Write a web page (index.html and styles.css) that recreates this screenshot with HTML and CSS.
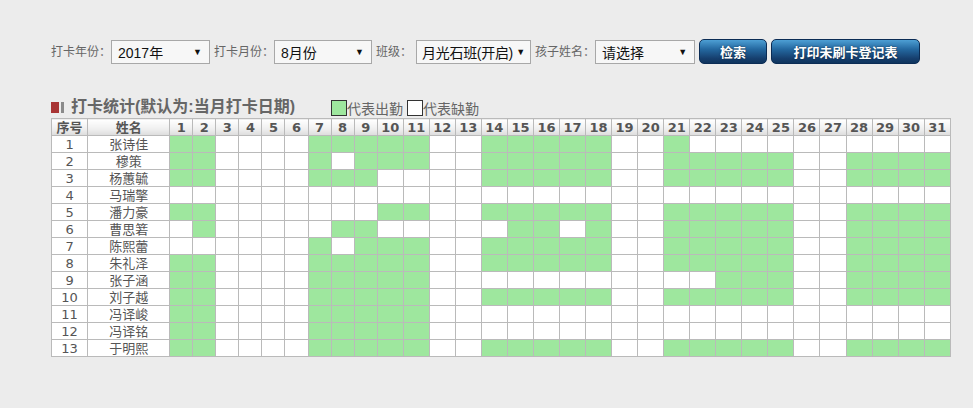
FILE: index.html
```html
<!DOCTYPE html>
<html lang="zh-CN">
<head>
    <meta charset="UTF-8">
    <title>打卡统计</title>
    <link rel="stylesheet" href="styles.css">
</head>
<body>
    <div class="page">
        <div class="filter">
            <span class="label">打卡年份：</span>
            <div class="select sel-year"><span>2017年</span><i>▼</i></div>
            <span class="label">打卡月份：</span>
            <div class="select sel-month"><span>8月份</span><i>▼</i></div>
            <span class="label label-class">班级：</span>
            <div class="select sel-class"><span>月光石班(开启)</span><i>▼</i></div>
            <span class="label">孩子姓名：</span>
            <div class="select sel-name"><span>请选择</span><i>▼</i></div>
            <button class="btn btn-search">检索</button>
            <button class="btn btn-print">打印未刷卡登记表</button>
        </div>

        <div class="title-bar">
            <span class="title-icon"><b></b><em></em></span>
            <h2>打卡统计(默认为:当月打卡日期)</h2>
            <span class="legend legend-on"><i class="box on"></i>代表出勤</span>
            <span class="legend"><i class="box"></i>代表缺勤</span>
        </div>

        <table class="stats">
            <colgroup id="cols">
                <col class="col-no">
                <col class="col-name">
            </colgroup>
            <thead>
                <tr id="headRow"><th>序号</th><th>姓名</th></tr>
            </thead>
            <tbody id="statsBody"></tbody>
        </table>
    </div>

    <script>
        // 1 = 出勤, 0 = 缺勤 (grouped by week for reading)
        const students = [
            ["张诗佳", "11 0000 11111 00 11111 00 10000 00 0000"],
            ["穆策",   "11 0000 10111 00 11111 00 11111 00 1111"],
            ["杨蕙毓", "11 0000 11100 00 11111 00 11111 00 1111"],
            ["马瑞擎", "00 0000 00000 00 00000 00 00000 00 0000"],
            ["潘力豪", "11 0000 00011 00 11111 00 11111 00 1111"],
            ["曹思箬", "01 0000 01100 00 01101 00 11111 00 1111"],
            ["陈熙蕾", "00 0000 10111 00 11111 00 11111 00 1111"],
            ["朱礼泽", "11 0000 11111 00 11111 00 11111 00 1111"],
            ["张子涵", "11 0000 11111 00 00000 00 00111 00 1111"],
            ["刘子越", "11 0000 11111 00 11111 00 11111 00 1111"],
            ["冯译峻", "11 0000 11111 00 00000 00 00000 00 0000"],
            ["冯译铭", "11 0000 11111 00 00000 00 00000 00 0000"],
            ["于明熙", "11 0000 11111 00 11111 00 11111 00 1111"]
        ];

        const cols = document.getElementById("cols");
        const headRow = document.getElementById("headRow");
        for (let d = 1; d <= 31; d++) {
            const col = document.createElement("col");
            col.className = d < 10 ? "col-d1" : "col-d2";
            cols.appendChild(col);
            const th = document.createElement("th");
            th.textContent = d;
            headRow.appendChild(th);
        }

        const body = document.getElementById("statsBody");
        students.forEach((s, i) => {
            const tr = document.createElement("tr");
            tr.innerHTML = "<td>" + (i + 1) + "</td><td class='name'>" + s[0] + "</td>";
            s[1].replace(/ /g, "").split("").forEach(v => {
                const td = document.createElement("td");
                if (v === "1") td.className = "on";
                tr.appendChild(td);
            });
            body.appendChild(tr);
        });
    </script>
</body>
</html>
```

FILE: styles.css
```css
body {
    margin: 0;
    background: #ececec;
    font-family: "Liberation Sans", "Noto Sans CJK SC", sans-serif;
    color: #666;
}
.page { padding: 39px 0 0 51px; }

/* filter bar */
.filter { display: flex; align-items: center; height: 25px; font-size: 12px; }
.label { color: #666; line-height: 24px; white-space: nowrap; }
.select + .label { margin-left: 4px; }
.label-class { margin-right: 4px; }
.select {
    box-sizing: border-box;
    height: 24px;
    border: 1px solid #a8a8a8;
    background: #f7f7f7;
    display: flex;
    align-items: center;
    justify-content: space-between;
    padding: 0 7px 0 6px;
    font-size: 14px;
    color: #111;
    white-space: nowrap;
}
.select span { overflow: hidden; }
.select i { font-style: normal; font-size: 9px; color: #111; flex: none; margin-left: 2px; }
.sel-year { width: 99px; }
.sel-month { width: 98px; }
.sel-class { width: 115px; padding: 0 5px 0 5px; }
.sel-class span { letter-spacing: -0.3px; }
.sel-name { width: 100px; }
.btn {
    height: 25px;
    margin-left: 4px;
    padding: 0;
    border: 1px solid #0b2c55;
    border-radius: 5px;
    background: linear-gradient(#4d9fd4, #2468a0 40%, #163f6e 80%, #0f345e);
    color: #fff;
    font-family: inherit;
    font-size: 13px;
    font-weight: bold;
    text-shadow: 0 0 2px rgba(0, 0, 0, 0.6);
}
.btn-search { width: 68px; }
.btn-print { width: 149px; }

/* title + legend */
.title-bar { display: flex; align-items: flex-end; height: 22px; margin-top: 31px; padding-bottom: 1px; }
.title-icon { display: flex; gap: 2px; margin-bottom: 4px; }
.title-icon b { width: 8px; height: 11px; background: #a83434; }
.title-icon em { width: 3px; height: 11px; background: #8a8a8a; }
.title-bar h2 {
    margin: 0 0 0 7px;
    font-size: 16px;
    line-height: 20px;
    font-weight: bold;
    color: #666;
}
.legend { display: flex; align-items: flex-end; font-size: 14px; line-height: 16px; color: #666; }
.legend-on { margin-left: 36px; }
.legend + .legend { margin-left: 4px; }
.box {
    box-sizing: border-box;
    width: 16px;
    height: 16px;
    border: 1px solid #333;
    background: #fff;
    margin-bottom: 1px;
}
.box.on { background: #9ee79e; }

/* stats table */
.stats {
    border-collapse: collapse;
    table-layout: fixed;
    width: 900px;
    font-family: "DejaVu Sans", "Noto Sans CJK SC", sans-serif;
    font-size: 13px;
    color: #555;
    background: #fff;
}
.col-no { width: 36px; }
.col-name { width: 82px; }
.col-d1 { width: 23px; }
.col-d2 { width: 26px; }
.stats th, .stats td {
    border: 1px solid #bababa;
    height: 16px;
    padding: 0;
    line-height: 15px;
    text-align: center;
    white-space: nowrap;
}
.stats th {
    background: linear-gradient(#ffffff, #f1f1f1 55%, #dcdcdc);
    font-weight: bold;
    font-size: 13px;
    color: #555;
}
.stats td.name { font-size: 13px; }
.stats td.on { background: #9ee79e; }
```
